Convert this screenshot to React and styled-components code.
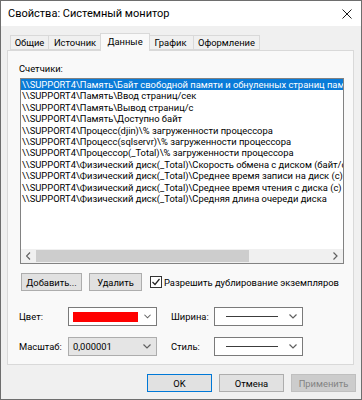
import React from 'react';
import styled, { createGlobalStyle } from 'styled-components';

const GlobalStyle = createGlobalStyle`
    html, body {
        margin: 0;
        padding: 0;
        background: #ffffff;
    }
    body {
        font-family: Roboto, 'Liberation Sans', sans-serif;
    }
`;

const Window = styled.div`
    box-sizing: border-box;
    width: 362px;
    height: 400px;
    border: 1px solid #6e6e6e;
    background: #f0f0f0;
    display: flex;
    flex-direction: column;
    font-size: 9.4px;
    color: #000;
`;

const TitleBar = styled.div`
    height: 25px;
    flex: none;
    background: #fff;
    display: flex;
    align-items: center;
    justify-content: space-between;
    padding: 0 9px 0 7px;
    font-size: 11px;
    color: #000;
`;

const Content = styled.div`
    padding: 7px 7px 0 6px;
`;

const TabStrip = styled.div`
    display: flex;
    align-items: flex-end;
    height: 18px;
    padding-left: 3px;
    margin-bottom: -1px;
    position: relative;
    z-index: 1;
`;

const Tab = styled.div`
    box-sizing: border-box;
    flex: none;
    width: ${p => p.w}px;
    height: ${p => (p.active ? 18 : 15)}px;
    margin-left: ${p => p.ml || 0}px;
    margin-bottom: ${p => (p.active ? 0 : 1)}px;
    border: 1px solid #d9d9d9;
    border-bottom: ${p => (p.active ? 'none' : '1px solid #d9d9d9')};
    background: ${p => (p.active ? '#f9f9f9' : '#f0f0f0')};
    position: relative;
    z-index: ${p => (p.active ? 2 : 1)};
    display: flex;
    align-items: center;
    justify-content: center;
    padding-bottom: ${p => (p.active ? 2 : 0)}px;
    white-space: nowrap;
`;

const Panel = styled.div`
    box-sizing: border-box;
    height: 315px;
    border: 1px solid #d9d9d9;
    background: #f9f9f9;
    padding: 12px 9px 0 12px;
    display: flex;
    flex-direction: column;
`;

const FieldLabel = styled.div`
    height: 12px;
    line-height: 12px;
    margin: 0 0 3px -1px;
`;

const ListBox = styled.div`
    box-sizing: border-box;
    width: 324px;
    height: 186px;
    border: 1px solid #828282;
    background: #fff;
    display: flex;
    flex-direction: column;
`;

const Items = styled.div`
    flex: 1;
    overflow: hidden;
`;

const Item = styled.div`
    height: 11.4px;
    line-height: 11.4px;
    padding-left: 1px;
    white-space: nowrap;
    overflow: hidden;
    background: ${p => (p.selected ? '#0a7bd8' : 'transparent')};
    color: ${p => (p.selected ? '#fff' : '#000')};
`;

const HScroll = styled.div`
    height: 14px;
    flex: none;
    display: flex;
    align-items: center;
    background: #f0f0f0;
`;

const ScrollArrow = styled.div`
    width: 15px;
    height: 14px;
    flex: none;
    display: flex;
    align-items: center;
    justify-content: center;
`;

const Track = styled.div`
    flex: 1;
    height: 12px;
    display: flex;
`;

const Thumb = styled.div`
    width: 213px;
    height: 12px;
    background: #cdcdcd;
`;

const ButtonRow = styled.div`
    display: flex;
    align-items: center;
    margin-top: 9px;
    padding-left: 1px;
`;

const Button = styled.div`
    box-sizing: border-box;
    flex: none;
    width: ${p => p.w}px;
    height: 18px;
    margin-right: ${p => p.mr || 0}px;
    border: 1px solid ${p => (p.focused ? '#0078d7' : p.disabled ? '#bfbfbf' : '#adadad')};
    background: ${p => (p.disabled ? '#cccccc' : '#e1e1e1')};
    color: ${p => (p.disabled ? '#838383' : '#000')};
    display: flex;
    align-items: center;
    justify-content: center;
    white-space: nowrap;
`;

const CheckLabel = styled.label`
    display: flex;
    align-items: center;
    gap: 2px;
    white-space: nowrap;
`;

const FormGrid = styled.div`
    display: grid;
    grid-template-columns: 48px 89px 57px 89px;
    grid-auto-rows: 19px;
    row-gap: 11px;
    margin-top: 16px;
    align-items: center;
`;

const GridLabel = styled.div`
    padding-left: ${p => p.pl || 0}px;
    margin-left: -1px;
    white-space: nowrap;
`;

const Combo = styled.div`
    box-sizing: border-box;
    height: 19px;
    border: 1px solid ${p => (p.flat ? '#adadad' : '#7a7a7a')};
    background: ${p => (p.flat ? '#e5e5e5' : '#fff')};
    display: flex;
    align-items: center;
    padding: 0 5px 0 4px;
    gap: 6px;
`;

const ComboValue = styled.div`
    flex: 1;
    display: flex;
    align-items: center;
`;

const Swatch = styled.div`
    width: 65px;
    height: 10px;
    background: #ff0000;
`;

const LineSample = styled.div`
    width: 52px;
    height: 1px;
    margin-left: 7px;
    background: #3c3c3c;
`;

const Footer = styled.div`
    display: flex;
    justify-content: flex-end;
    gap: 7px;
    padding: 9px 5px 0 0;
`;

const Chevron = ({ dir = 'down', color = '#606060' }) => {
    const points = {
        down: '0.5,0.5 4,4 7.5,0.5',
        left: '4,0.5 0.5,4 4,7.5',
        right: '0.5,0.5 4,4 0.5,7.5'
    }[dir];
    const box = dir === 'down' ? '0 0 8 5' : '0 0 5 8';
    return (
        <svg width={dir === 'down' ? 8 : 5} height={dir === 'down' ? 5 : 8} viewBox={box}>
            <polyline points={points} fill="none" stroke={color} strokeWidth="1.2" />
        </svg>
    );
};

const CloseIcon = () => (
    <svg width="10" height="10" viewBox="0 0 10 10">
        <path d="M0.5 0.5 L9.5 9.5 M9.5 0.5 L0.5 9.5" stroke="#1a1a1a" strokeWidth="1" />
    </svg>
);

const CheckBox = () => (
    <svg width="12" height="12" viewBox="0 0 12 12">
        <rect x="0.5" y="0.5" width="11" height="11" fill="#fff" stroke="#333" />
        <polyline points="2.5,6 5,8.5 9.5,3" fill="none" stroke="#222" strokeWidth="1.2" />
    </svg>
);

const tabs = [
    { name: 'Общие', w: 39 },
    { name: 'Источник', w: 54, ml: -1 },
    { name: 'Данные', w: 50, ml: -2, active: true },
    { name: 'График', w: 47, ml: -3 },
    { name: 'Оформление', w: 67, ml: -1 }
];

const counters = [
    '\\\\SUPPORT4\\Память\\Байт свободной памяти и обнуленных страниц памяти',
    '\\\\SUPPORT4\\Память\\Ввод страниц/сек',
    '\\\\SUPPORT4\\Память\\Вывод страниц/с',
    '\\\\SUPPORT4\\Память\\Доступно байт',
    '\\\\SUPPORT4\\Процесс(djin)\\% загруженности процессора',
    '\\\\SUPPORT4\\Процесс(sqlservr)\\% загруженности процессора',
    '\\\\SUPPORT4\\Процессор(_Total)\\% загруженности процессора',
    '\\\\SUPPORT4\\Физический диск(_Total)\\Скорость обмена с диском (байт/с)',
    '\\\\SUPPORT4\\Физический диск(_Total)\\Среднее время записи на диск (с)',
    '\\\\SUPPORT4\\Физический диск(_Total)\\Среднее время чтения с диска (с)',
    '\\\\SUPPORT4\\Физический диск(_Total)\\Средняя длина очереди диска'
];

export default function App() {
    return (
        <>
            <GlobalStyle />
            <Window>
                <TitleBar>
                    <span>Свойства: Системный монитор</span>
                    <CloseIcon />
                </TitleBar>
                <Content>
                    <TabStrip>
                        {tabs.map(t => (
                            <Tab key={t.name} w={t.w} ml={t.ml} active={t.active}>
                                {t.name}
                            </Tab>
                        ))}
                    </TabStrip>
                    <Panel>
                        <FieldLabel>Счетчики:</FieldLabel>
                        <ListBox>
                            <Items>
                                {counters.map((c, i) => (
                                    <Item key={c} selected={i === 0}>
                                        {c}
                                    </Item>
                                ))}
                            </Items>
                            <HScroll>
                                <ScrollArrow>
                                    <Chevron dir="left" />
                                </ScrollArrow>
                                <Track>
                                    <Thumb />
                                </Track>
                                <ScrollArrow>
                                    <Chevron dir="right" />
                                </ScrollArrow>
                            </HScroll>
                        </ListBox>
                        <ButtonRow>
                            <Button w={61} mr={7}>Добавить...</Button>
                            <Button w={53} mr={8}>Удалить</Button>
                            <CheckLabel>
                                <CheckBox />
                                Разрешить дублирование экземпляров
                            </CheckLabel>
                        </ButtonRow>
                        <FormGrid>
                            <GridLabel>Цвет:</GridLabel>
                            <Combo>
                                <ComboValue>
                                    <Swatch />
                                </ComboValue>
                                <Chevron />
                            </Combo>
                            <GridLabel pl={15}>Ширина:</GridLabel>
                            <Combo>
                                <ComboValue>
                                    <LineSample />
                                </ComboValue>
                                <Chevron />
                            </Combo>
                            <GridLabel>Масштаб:</GridLabel>
                            <Combo flat>
                                <ComboValue>0,000001</ComboValue>
                                <Chevron />
                            </Combo>
                            <GridLabel pl={15}>Стиль:</GridLabel>
                            <Combo>
                                <ComboValue>
                                    <LineSample />
                                </ComboValue>
                                <Chevron />
                            </Combo>
                        </FormGrid>
                    </Panel>
                </Content>
                <Footer>
                    <Button w={65} focused>OK</Button>
                    <Button w={65}>Отмена</Button>
                    <Button w={65} disabled>Применить</Button>
                </Footer>
            </Window>
        </>
    );
}
